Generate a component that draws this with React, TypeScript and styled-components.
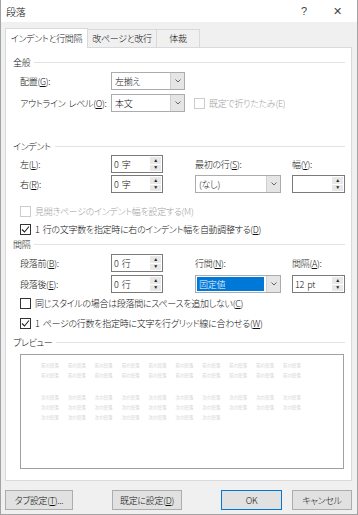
import React from 'react';
import styled, { createGlobalStyle } from 'styled-components';

const GlobalStyle = createGlobalStyle`
	html, body {
		margin: 0;
		padding: 0;
		background: #f0f0f0;
	}
	body {
		font-family: "Noto Sans CJK JP", "Noto Sans", sans-serif;
		font-feature-settings: "palt";
		font-weight: 300;
		letter-spacing: -0.3px;
		word-spacing: 1.5px;
		color: #111;
	}
	u {
		text-decoration-thickness: 1px;
		text-underline-offset: 1px;
	}
`;

const Chevron = () => (
	<svg width='6' height='4' viewBox='0 0 6 4'>
		<polyline points='0.5,0.5 3,3 5.5,0.5' fill='none' stroke='#555' strokeWidth='0.9' />
	</svg>
);

const Check = () => (
	<svg width='9' height='9' viewBox='0 0 9 9'>
		<polyline points='1,4.5 3.5,7 8,1.5' fill='none' stroke='#222' strokeWidth='1.1' />
	</svg>
);

const Field = ({ value, width, selected }: { value: string; width: number; selected?: boolean }) => (
	<SelectBox width={width}>
		<SelectText selected={selected}>{value}</SelectText>
		<DropButton>
			<Chevron />
		</DropButton>
	</SelectBox>
);

const Spin = ({ value, width }: { value: string; width: number }) => (
	<SpinBox width={width}>
		<SpinText>{value}</SpinText>
		<SpinButtons>
			<SpinArrow>▲</SpinArrow>
			<SpinArrow>▼</SpinArrow>
		</SpinButtons>
	</SpinBox>
);

const CheckRow = ({ checked, disabled, children }: { checked?: boolean; disabled?: boolean; children: React.ReactNode }) => (
	<CheckLine disabled={disabled}>
		<CheckBox disabled={disabled}>{checked ? <Check /> : null}</CheckBox>
		<span>{children}</span>
	</CheckLine>
);

const before = Array.from({ length: 10 }, () => '前の段落');
const after = Array.from({ length: 10 }, () => '次の段落');

function App() {
	return (
		<Window>
			<GlobalStyle />
			<TitleBar>
				<Title>段落</Title>
				<TitleButton>?</TitleButton>
				<TitleButton close>✕</TitleButton>
			</TitleBar>
			<Body>
				<Tabs>
					<Tab active width={83}>インデントと行間隔</Tab>
					<Tab width={69}>改ページと改行</Tab>
					<Tab width={43}>体裁</Tab>
				</Tabs>
				<Panel>
					<SectionHeader>全般</SectionHeader>
					<GeneralRows>
						<GeneralRow>
							<Label>配置(<u>G</u>):</Label>
							<Field value='左揃え' width={74} />
						</GeneralRow>
						<GeneralRow>
							<Label>アウトライン レベル(<u>O</u>):</Label>
							<Field value='本文' width={74} />
							<CollapseCheck>
								<CheckRow disabled>既定で折りたたみ(E)</CheckRow>
							</CollapseCheck>
						</GeneralRow>
					</GeneralRows>

					<SectionHeader top={27}>インデント</SectionHeader>
					<FormGrid top={2} gap={2}>
						<Label>左(<u>L</u>):</Label>
						<Spin value='0 字' width={52} />
						<span />
						<Label>最初の行(<u>S</u>):</Label>
						<span />
						<Label>幅(<u>Y</u>):</Label>
						<Label>右(<u>R</u>):</Label>
						<Spin value='0 字' width={52} />
						<span />
						<Field value='(なし)' width={86} />
						<span />
						<Spin value='' width={53} />
					</FormGrid>
					<CheckList top={11} gap={4}>
						<CheckRow disabled>見開きページのインデント幅を設定する(M)</CheckRow>
						<CheckRow checked>1 行の文字数を指定時に右のインデント幅を自動調整する(<u>D</u>)</CheckRow>
					</CheckList>

					<SectionHeader top={1}>間隔</SectionHeader>
					<FormGrid top={3} gap={3}>
						<Label>段落前(<u>B</u>):</Label>
						<Spin value='0 行' width={52} />
						<span />
						<Label>行間(<u>N</u>):</Label>
						<span />
						<Label>間隔(<u>A</u>):</Label>
						<Label>段落後(<u>E</u>):</Label>
						<Spin value='0 行' width={52} />
						<span />
						<Field value='固定値' width={86} selected />
						<span />
						<Spin value='12 pt' width={53} />
					</FormGrid>
					<CheckList top={3} gap={6}>
						<CheckRow>同じスタイルの場合は段落間にスペースを追加しない(<u>C</u>)</CheckRow>
						<CheckRow checked>1 ページの行数を指定時に文字を行グリッド線に合わせる(<u>W</u>)</CheckRow>
					</CheckList>

					<SectionHeader top={5}>プレビュー</SectionHeader>
					<Preview>
						<PreviewPara>
							<PreviewLine>{before.map((w, i) => <Word key={i}>{w}</Word>)}</PreviewLine>
							<PreviewLine>{before.map((w, i) => <Word key={i}>{w}</Word>)}</PreviewLine>
						</PreviewPara>
						<PreviewPara top={12}>
							<PreviewLine>{after.map((w, i) => <Word key={i}>{w}</Word>)}</PreviewLine>
							<PreviewLine>{after.map((w, i) => <Word key={i}>{w}</Word>)}</PreviewLine>
							<PreviewLine>{after.slice(0, 7).map((w, i) => <Word key={i}>{w}</Word>)}</PreviewLine>
						</PreviewPara>
					</Preview>
				</Panel>
				<Footer>
					<DialogButton width={68}>タブ設定(<u>T</u>)...</DialogButton>
					<DialogButton width={70} offset={39}>既定に設定(<u>D</u>)</DialogButton>
					<DialogButton width={61} primary auto>OK</DialogButton>
					<DialogButton width={60} offset={10}>キャンセル</DialogButton>
				</Footer>
			</Body>
		</Window>
	);
}

const Window = styled('div')`
	width: 358px;
	height: 515px;
	box-sizing: border-box;
	border: 1px solid #a3a3a3;
	border-top: none;
	background: #f0f0f0;
	display: flex;
	flex-direction: column;
`;
const TitleBar = styled('div')`
	height: 22px;
	background: #fff;
	display: flex;
	align-items: center;
	padding: 0 0 0 5px;
`;
const Title = styled('span')`
	font-size: 10px;
	flex: 1;
`;
const TitleButton = styled('span')<{ close?: boolean }>`
	width: ${(p) => (p.close ? '34px' : '30px')};
	text-align: center;
	font-family: "Liberation Sans", sans-serif;
	font-size: 11px;
	color: #444;
	margin-right: ${(p) => (p.close ? '3px' : '1px')};
`;
const Body = styled('div')`
	flex: 1;
	padding: 5px 5px 0 4px;
	display: flex;
	flex-direction: column;
`;
const Tabs = styled('div')`
	display: flex;
	align-items: flex-end;
	height: 20px;
	position: relative;
	z-index: 1;
`;
const Tab = styled('div')<{ active?: boolean; width: number }>`
	width: ${(p) => p.width}px;
	box-sizing: border-box;
	height: ${(p) => (p.active ? '20px' : '18px')};
	margin-bottom: ${(p) => (p.active ? '-1px' : '0')};
	background: ${(p) => (p.active ? '#fff' : '#f0f0f0')};
	border: 1px solid #d9d9d9;
	border-bottom: none;
	border-left: ${(p) => (p.active ? '1px solid #d9d9d9' : 'none')};
	font-size: 9px;
	white-space: nowrap;
	display: flex;
	align-items: center;
	justify-content: center;
`;
const Panel = styled('div')`
	height: 434px;
	box-sizing: border-box;
	background: #fff;
	border: 1px solid #d9d9d9;
	padding: 7px 6px 0 7px;
	display: flex;
	flex-direction: column;
`;
const SectionHeader = styled('div')<{ top?: number }>`
	height: 14px;
	margin-top: ${(p) => p.top || 0}px;
	display: flex;
	align-items: center;
	gap: 4px;
	font-size: 9px;
	&::after {
		content: '';
		flex: 1;
		height: 1px;
		background: #e3e3e3;
	}
`;
const GeneralRows = styled('div')`
	margin-top: 3px;
	padding-left: 7px;
	display: flex;
	flex-direction: column;
	gap: 4px;
`;
const GeneralRow = styled('div')`
	height: 18px;
	display: flex;
	align-items: center;
`;
const Label = styled('span')`
	font-size: 9px;
	white-space: nowrap;
	display: flex;
	align-items: center;
	width: 91px;
	flex: none;
`;
const CollapseCheck = styled('div')`
	margin-left: 9px;
`;
const FormGrid = styled('div')<{ top: number; gap: number }>`
	margin-top: ${(p) => p.top}px;
	padding-left: 7px;
	display: grid;
	grid-template-columns: 91px 52px 32px 86px 11px 53px;
	grid-auto-rows: 18px;
	row-gap: ${(p) => p.gap}px;
	& > ${Label} {
		width: auto;
	}
`;
const SelectBox = styled('div')<{ width: number }>`
	width: ${(p) => p.width}px;
	height: 18px;
	box-sizing: border-box;
	border: 1px solid #acacac;
	background: #fff;
	display: flex;
	align-items: stretch;
`;
const SelectText = styled('div')<{ selected?: boolean }>`
	flex: 1;
	margin: 1px;
	padding-left: 2px;
	font-size: 9px;
	display: flex;
	align-items: center;
	background: ${(p) => (p.selected ? '#0078d7' : 'transparent')};
	color: ${(p) => (p.selected ? '#fff' : '#111')};
	margin-right: ${(p) => (p.selected ? '2px' : '1px')};
`;
const DropButton = styled('div')`
	width: 13px;
	background: #e5e5e5;
	border-left: 1px solid #d0d0d0;
	display: flex;
	align-items: center;
	justify-content: center;
`;
const SpinBox = styled('div')<{ width: number }>`
	width: ${(p) => p.width}px;
	height: 18px;
	box-sizing: border-box;
	border: 1px solid #7a7a7a;
	background: #fff;
	display: flex;
`;
const SpinText = styled('div')`
	flex: 1;
	padding-left: 2px;
	font-size: 9px;
	display: flex;
	align-items: center;
`;
const SpinButtons = styled('div')`
	width: 11px;
	margin: 1px;
	display: flex;
	flex-direction: column;
	gap: 1px;
`;
const SpinArrow = styled('div')`
	flex: 1;
	background: #e8e8e8;
	font-family: "DejaVu Sans", sans-serif;
	font-size: 5px;
	line-height: 1;
	display: flex;
	align-items: center;
	justify-content: center;
	color: #222;
`;
const CheckList = styled('div')<{ top: number; gap: number }>`
	margin-top: ${(p) => p.top}px;
	padding-left: 7px;
	display: flex;
	flex-direction: column;
	gap: ${(p) => p.gap}px;
`;
const CheckLine = styled('div')<{ disabled?: boolean }>`
	height: 14px;
	display: flex;
	align-items: center;
	gap: 4px;
	font-size: 9px;
	white-space: nowrap;
	color: ${(p) => (p.disabled ? '#a0a0a0' : '#111')};
`;
const CheckBox = styled('div')<{ disabled?: boolean }>`
	width: 11px;
	height: 11px;
	box-sizing: border-box;
	border: 1px solid ${(p) => (p.disabled ? '#cccccc' : '#333')};
	background: #fff;
	display: flex;
	align-items: center;
	justify-content: center;
`;
const Preview = styled('div')`
	margin: 5px 0 0 7px;
	width: 324px;
	height: 115px;
	box-sizing: border-box;
	border: 1px solid #a0a0a0;
	padding: 5px 0 0 20px;
`;
const PreviewPara = styled('div')<{ top?: number }>`
	margin-top: ${(p) => p.top || 0}px;
`;
const PreviewLine = styled('div')`
	height: 10px;
	display: flex;
	align-items: center;
`;
const Word = styled('span')`
	width: 26.9px;
	flex: none;
	font-size: 4.5px;
	letter-spacing: 0;
	color: #c4c4c4;
	white-space: nowrap;
`;
const Footer = styled('div')`
	margin-top: 9px;
	display: flex;
`;
const DialogButton = styled('div')<{ width: number; offset?: number; primary?: boolean; auto?: boolean }>`
	width: ${(p) => p.width}px;
	height: 20px;
	box-sizing: border-box;
	margin-left: ${(p) => (p.auto ? 'auto' : `${p.offset || 0}px`)};
	background: #e1e1e1;
	border: 1px solid ${(p) => (p.primary ? '#0078d7' : '#adadad')};
	font-size: 9px;
	display: flex;
	align-items: center;
	justify-content: center;
	white-space: nowrap;
`;

export default App;
